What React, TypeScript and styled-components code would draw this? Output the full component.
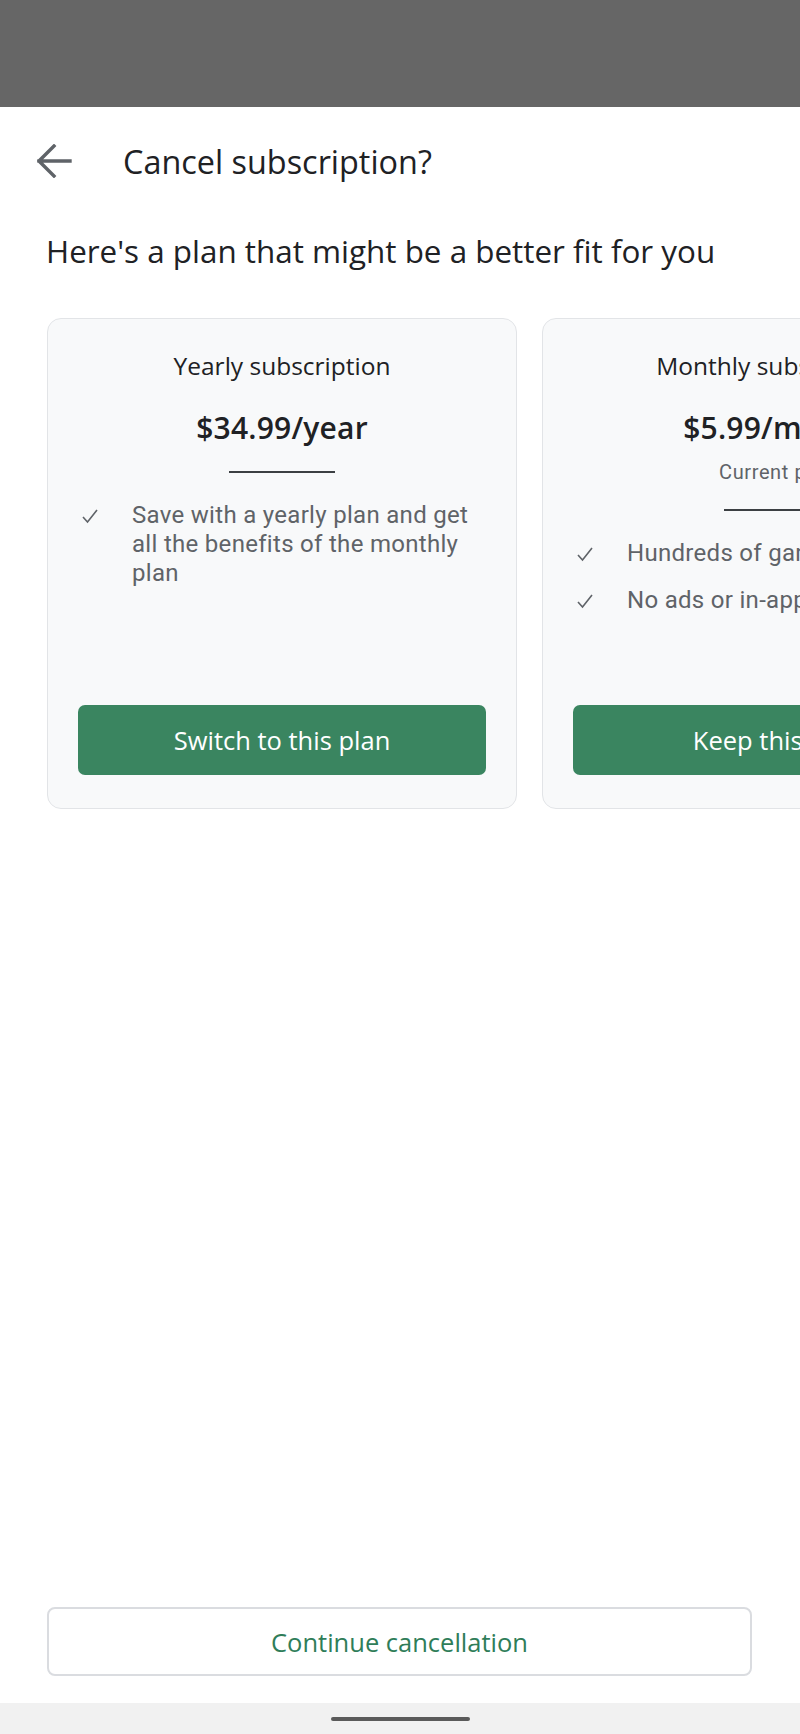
import styled, { createGlobalStyle } from 'styled-components';

interface IPlan {
  name: string;
  price: string;
  current?: boolean;
  features: string[];
  action: string;
}

const plans: IPlan[] = [
  {
    name: 'Yearly subscription',
    price: '$34.99/year',
    features: ['Save with a yearly plan and get all the benefits of the monthly plan'],
    action: 'Switch to this plan',
  },
  {
    name: 'Monthly subscription',
    price: '$5.99/month',
    current: true,
    features: ['Hundreds of games with no ads', 'No ads or in-app purchases'],
    action: 'Keep this plan',
  },
];

const GlobalStyle = createGlobalStyle`
  html, body {
    margin: 0;
    padding: 0;
    background: #ffffff;
  }

  body {
    font-family: "Open Sans", Lato, sans-serif;
    color: #202124;
  }

  * {
    box-sizing: border-box;
  }
`;

const PageStyled = styled.div`
  display: flex;
  flex-direction: column;
  min-height: 100vh;
  width: 800px;
  overflow: hidden;
`;

const ScrimStyled = styled.div`
  height: 107px;
  background: #666666;
`;

const HeaderStyled = styled.div`
  display: flex;
  align-items: center;
  padding: 34px 0 0 37px;
  gap: 51px;
`;

const BackIconStyled = styled.svg`
  width: 35px;
  height: 34px;
  color: #5f6368;
`;

const TitleStyled = styled.h1`
  margin: 0;
  font-size: 32.4px;
  line-height: 40px;
  font-weight: 400;
  color: #202124;
`;

const HeadingStyled = styled.h2`
  margin: 50px 0 0;
  padding-left: 46px;
  font-size: 31.4px;
  line-height: 40px;
  font-weight: 400;
  color: #202124;
  white-space: nowrap;
`;

const CarouselStyled = styled.div`
  display: flex;
  gap: 25px;
  padding-left: 47px;
  margin-top: 47px;
  overflow: hidden;
`;

const CardStyled = styled.div`
  flex: 0 0 470px;
  min-height: 491px;
  display: flex;
  flex-direction: column;
  align-items: center;
  padding: 32px 30px 33px;
  background: #f8f9fa;
  border: 1px solid #e2e4e7;
  border-radius: 14px;
`;

const PlanNameStyled = styled.div`
  font-size: 24.5px;
  line-height: 30px;
  font-weight: 400;
  color: #202124;
  white-space: nowrap;
`;

const PriceStyled = styled.div`
  margin-top: 29px;
  font-size: 30px;
  line-height: 36px;
  font-weight: 600;
  letter-spacing: 0.2px;
  color: #202124;
  white-space: nowrap;
`;

const CurrentStyled = styled.div`
  margin-top: 14px;
  font-family: Roboto, sans-serif;
  font-size: 20px;
  line-height: 24px;
  letter-spacing: 0.6px;
  color: #5f6368;
  white-space: nowrap;
`;

const DividerStyled = styled.div`
  margin-top: 25px;
  width: 106px;
  height: 2px;
  background: #3c4043;
`;

const FeaturesStyled = styled.ul`
  align-self: stretch;
  list-style: none;
  margin: 28px 0 0;
  padding: 0 0 0 4px;
  display: flex;
  flex-direction: column;
  gap: 18px;
`;

const FeatureStyled = styled.li<{ $nowrap?: boolean }>`
  display: grid;
  grid-template-columns: 16px 1fr;
  column-gap: 34px;
  align-items: start;
  font-family: Roboto, sans-serif;
  font-size: 24px;
  line-height: 29px;
  letter-spacing: 0.3px;
  color: #5f6368;
  white-space: ${({ $nowrap }) => ($nowrap ? 'nowrap' : 'normal')};
`;

const CheckStyled = styled.svg`
  width: 16px;
  height: 16px;
  margin-top: 7px;
  color: #5f6368;
`;

const PrimaryButtonStyled = styled.button`
  align-self: stretch;
  margin-top: auto;
  height: 70px;
  border: none;
  border-radius: 7px;
  background: #3a8560;
  color: #ffffff;
  font-family: "Open Sans", sans-serif;
  font-size: 25.5px;
  font-weight: 500;
  white-space: nowrap;
`;

const SpacerStyled = styled.div`
  flex: 1;
`;

const FooterStyled = styled.div`
  padding: 0 48px 27px 47px;
`;

const OutlineButtonStyled = styled.button`
  width: 100%;
  height: 69px;
  background: #ffffff;
  border: 2px solid #dadce0;
  border-radius: 8px;
  color: #2f7d59;
  font-family: "Open Sans", sans-serif;
  font-size: 25.5px;
  font-weight: 500;
`;

const NavBarStyled = styled.div`
  height: 31px;
  display: flex;
  justify-content: center;
  align-items: center;
  background: #f1f1f1;
`;

const HandleStyled = styled.div`
  width: 139px;
  height: 4px;
  border-radius: 2px;
  background: #5a5a5a;
`;

const BackIcon = () => (
  <BackIconStyled viewBox="0 0 35 34" fill="none">
    <path
      d="M2 17H33M17 2L2 17L17 32"
      stroke="currentColor"
      strokeWidth="3.4"
      strokeLinecap="square"
    />
  </BackIconStyled>
);

const Check = () => (
  <CheckStyled viewBox="0 0 16 16" fill="none">
    <polyline points="1,9 5.5,14 15,2" stroke="currentColor" strokeWidth="1.6" />
  </CheckStyled>
);

const PlanCard = ({ plan }: { plan: IPlan }) => (
  <CardStyled>
    <PlanNameStyled>{plan.name}</PlanNameStyled>
    <PriceStyled>{plan.price}</PriceStyled>
    {plan.current && <CurrentStyled>Current plan</CurrentStyled>}
    <DividerStyled />
    <FeaturesStyled>
      {plan.features.map((feature) => (
        <FeatureStyled key={feature} $nowrap={plan.current}>
          <Check />
          <span>{feature}</span>
        </FeatureStyled>
      ))}
    </FeaturesStyled>
    <PrimaryButtonStyled>{plan.action}</PrimaryButtonStyled>
  </CardStyled>
);

const App = () => (
  <>
    <GlobalStyle />
    <PageStyled>
      <ScrimStyled />
      <HeaderStyled>
        <BackIcon />
        <TitleStyled>Cancel subscription?</TitleStyled>
      </HeaderStyled>
      <HeadingStyled>Here's a plan that might be a better fit for you</HeadingStyled>
      <CarouselStyled>
        {plans.map((plan) => (
          <PlanCard key={plan.name} plan={plan} />
        ))}
      </CarouselStyled>
      <SpacerStyled />
      <FooterStyled>
        <OutlineButtonStyled>Continue cancellation</OutlineButtonStyled>
      </FooterStyled>
      <NavBarStyled>
        <HandleStyled />
      </NavBarStyled>
    </PageStyled>
  </>
);

export default App;
